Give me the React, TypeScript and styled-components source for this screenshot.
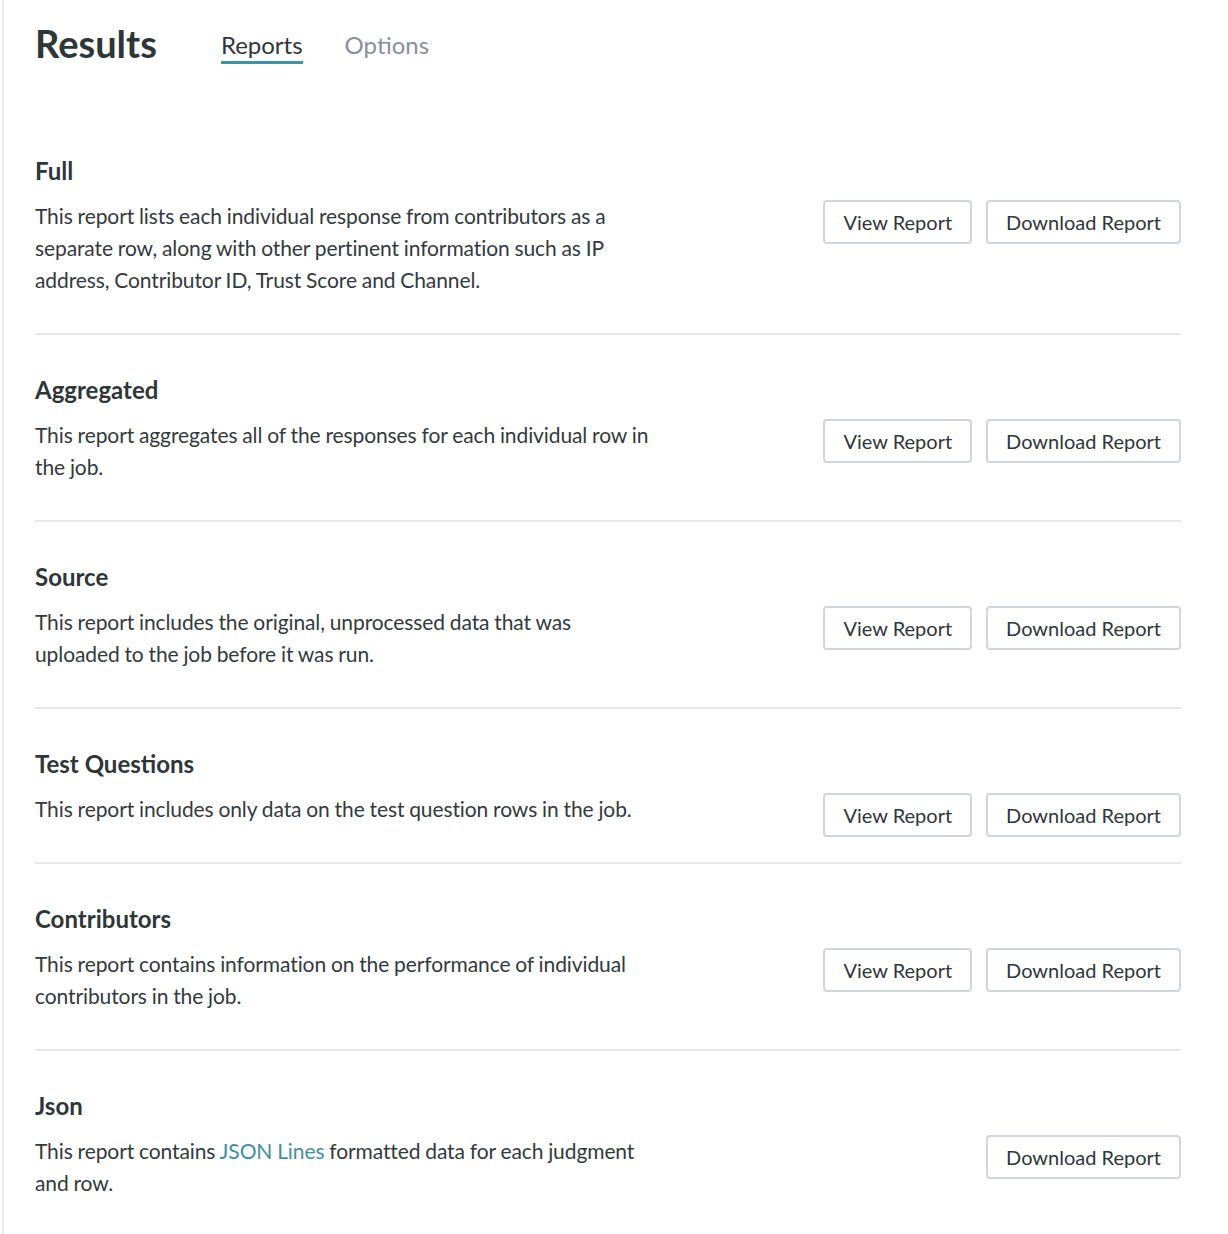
import React from "react";
import styled, { createGlobalStyle } from "styled-components";

const GlobalStyle = createGlobalStyle`
  html, body {
    margin: 0;
    padding: 0;
    background: #ffffff;
  }
  body {
    font-family: Lato, "Open Sans", "Liberation Sans", sans-serif;
    color: #333a3d;
  }
`;

const Page = styled.div`
  margin-left: 2px;
  border-left: 2px solid #ebebeb;
  min-height: 1234px;
  padding: 0 47px 0 31px;
  box-sizing: border-box;
`;

const Header = styled.div`
  display: flex;
  align-items: flex-end;
  padding-top: 18px;
  height: 64px;
  box-sizing: border-box;
`;

const Title = styled.h1`
  margin: 0 64px 0 0;
  font-size: 38px;
  font-weight: 700;
  line-height: 42px;
  color: #2f3638;
`;

const Tabs = styled.div`
  display: flex;
  gap: 42px;
`;

const Tab = styled.a<{ $active?: boolean }>`
  font-size: 24px;
  line-height: 28px;
  padding-bottom: 2px;
  color: ${(p) => (p.$active ? "#30373a" : "#8a8f9c")};
  border-bottom: 3px solid ${(p) => (p.$active ? "#3e93a5" : "transparent")};
  cursor: pointer;
`;

const List = styled.div`
  margin-top: 52px;
`;

const Section = styled.section`
  padding: 39.5px 0 37.5px;
  border-bottom: 2px solid #e8e8e8;
  &:last-child {
    border-bottom: none;
  }
`;

const Heading = styled.h2`
  margin: 0 0 14px;
  font-size: 24px;
  font-weight: 700;
  line-height: 30px;
  color: #2f3638;
`;

const Row = styled.div`
  display: flex;
  align-items: flex-start;
  justify-content: space-between;
`;

const Description = styled.p`
  margin: 0;
  max-width: 622px;
  font-size: 21px;
  line-height: 32px;
  letter-spacing: -0.1px;
  word-spacing: -0.4px;
  color: #333a3d;
`;

const Link = styled.a`
  color: #3e8fa2;
  text-decoration: none;
`;

/* buttons hang below a one-line description without growing the row */
const Actions = styled.div`
  display: flex;
  gap: 14px;
  margin-bottom: -12px;
`;

const Button = styled.button`
  height: 44px;
  padding: 0 18px;
  background: #ffffff;
  border: 2px solid #d3d5dd;
  border-radius: 4px;
  font-family: inherit;
  font-size: 20px;
  color: #30373a;
  cursor: pointer;
`;

type Report = {
  title: string;
  text: React.ReactNode;
  view?: boolean;
};

const reports: Report[] = [
  {
    title: "Full",
    text:
      "This report lists each individual response from contributors as a separate row, along with other pertinent information such as IP address, Contributor ID, Trust Score and Channel.",
    view: true,
  },
  {
    title: "Aggregated",
    text: "This report aggregates all of the responses for each individual row in the job.",
    view: true,
  },
  {
    title: "Source",
    text: "This report includes the original, unprocessed data that was uploaded to the job before it was run.",
    view: true,
  },
  {
    title: "Test Questions",
    text: "This report includes only data on the test question rows in the job.",
    view: true,
  },
  {
    title: "Contributors",
    text: "This report contains information on the performance of individual contributors in the job.",
    view: true,
  },
  {
    title: "Json",
    text: (
      <>
        This report contains <Link href="#">JSON Lines</Link> formatted data for each judgment and row.
      </>
    ),
  },
];

export default function App() {
  return (
    <>
      <GlobalStyle />
      <Page>
        <Header>
          <Title>Results</Title>
          <Tabs>
            <Tab $active>Reports</Tab>
            <Tab>Options</Tab>
          </Tabs>
        </Header>
        <List>
          {reports.map((r) => (
            <Section key={r.title}>
              <Heading>{r.title}</Heading>
              <Row>
                <Description>{r.text}</Description>
                <Actions>
                  {r.view && <Button>View Report</Button>}
                  <Button>Download Report</Button>
                </Actions>
              </Row>
            </Section>
          ))}
        </List>
      </Page>
    </>
  );
}
